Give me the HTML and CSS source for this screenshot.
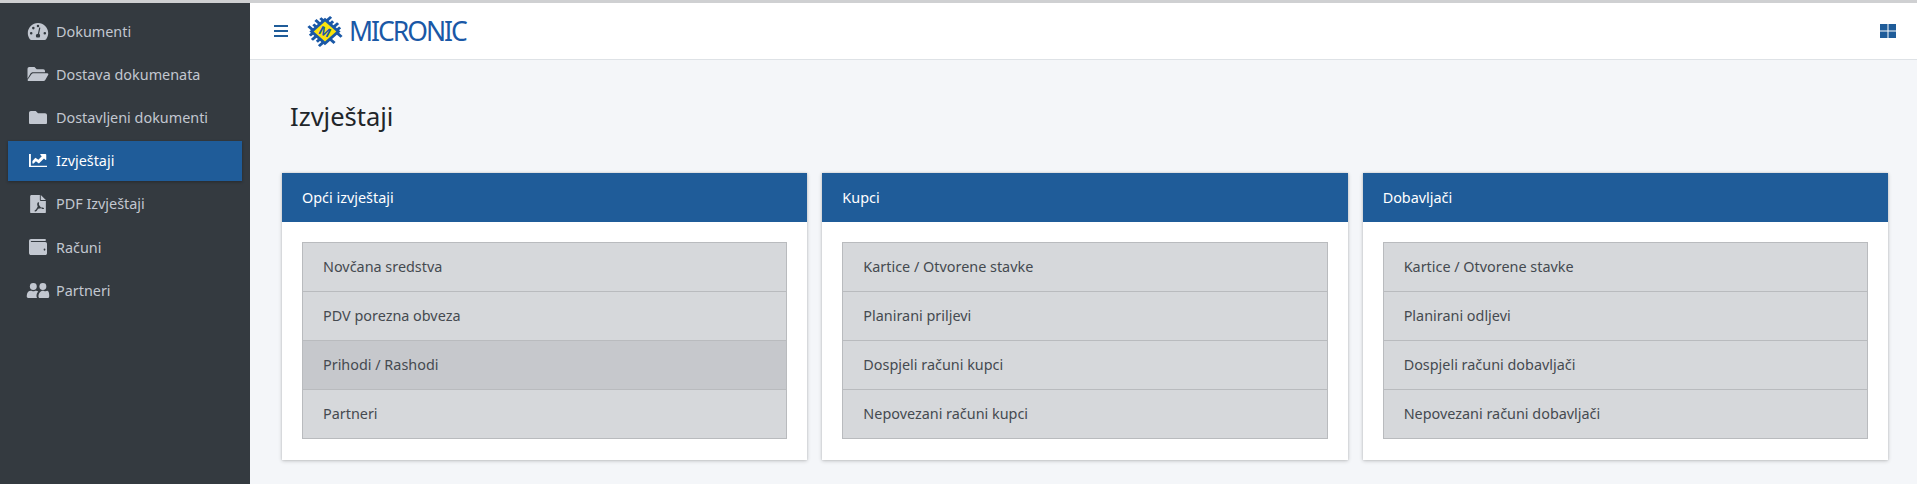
FILE: index.html
```html
<!DOCTYPE html>
<html lang="hr">
<head>
    <meta charset="UTF-8">
    <title>Izvještaji</title>
    <link rel="stylesheet" href="styles.css">
</head>
<body>
    <div class="wrapper">
        <!-- Sidebar -->
        <aside class="sidebar">
            <a class="nav-link" href="#">
                <svg class="nav-icon icon-gauge" viewBox="0 0 24 20"><path fill-rule="evenodd" d="M12 0C5.400 0 0 5.300 0 11.900c0 2.700.9 5.200 2.400 7.200.4.500 1 .9 1.700.9h15.800c.7 0 1.300-.4 1.700-.9 1.500-2 2.400-4.500 2.400-7.200C24 5.300 18.600 0 12 0zM4 13.500a1.500 1.500 0 1 1 0-3 1.500 1.500 0 0 1 0 3zM6.500 7.500a1.500 1.500 0 1 1 0-3 1.500 1.500 0 0 1 0 3zM12 5a1.500 1.500 0 1 1 0-3 1.500 1.500 0 0 1 0 3zM20 13.500a1.500 1.500 0 1 1 0-3 1.500 1.500 0 0 1 0 3zM14.800 5.600l-1.500 7.100c.7.500 1.200 1.300 1.200 2.300 0 .8-.3 1.400-.8 2H10.300c-.5-.6-.8-1.200-.8-2 0-1.400 1.100-2.500 2.400-2.500l1.500-7.200z"/></svg>
                <span>Dokumenti</span>
            </a>
            <a class="nav-link" href="#">
                <svg class="nav-icon icon-folder-open" viewBox="0 0 24 16"><path d="M0 13.500V2a2 2 0 0 1 2-2h6l2.500 2.500H18a2 2 0 0 1 2 2V6H6.500C5 6 3.800 6.700 3.100 8z"/><path d="M4.500 8.300C5 7.500 5.700 7 6.700 7h16c.9 0 1.500 1 1 1.800l-3.400 6C19.900 15.500 19.200 16 18.300 16H1.300c-.9 0-1.500-1-1-1.800z"/></svg>
                <span>Dostava dokumenata</span>
            </a>
            <a class="nav-link" href="#">
                <svg class="nav-icon icon-small" viewBox="0 0 24 18"><path d="M21.500 3H12L9 0H2.500C1.100 0 0 1.100 0 2.500v13C0 16.900 1.100 18 2.500 18h19c1.400 0 2.500-1.100 2.500-2.500v-10C24 4.100 22.900 3 21.500 3z"/></svg>
                <span>Dostavljeni dokumenti</span>
            </a>
            <a class="nav-link active" href="#">
                <svg class="nav-icon icon-small" viewBox="0 0 24 18"><path d="M0 0h2.500v15.500H24V18H1.200C.5 18 0 17.500 0 16.800z"/><path d="M4.500 12.500V9.300l4-4.300 4 2.800L17 3l-1.800-1.800c-.4-.5 0-1.200.6-1.200H22c.5 0 1 .4 1 1v6.200c0 .7-.8 1-1.300.6L20 6l-6.800 6.500-4-2.800-3 2.800z"/></svg>
                <span>Izvještaji</span>
            </a>
            <a class="nav-link" href="#">
                <svg class="nav-icon icon-pdf" viewBox="3 0 18 20"><path fill-rule="evenodd" d="M5 0h9v5.500c0 .5.500 1 1 1h5.500V18.500c0 .8-.7 1.500-1.500 1.500H5c-.8 0-1.500-.7-1.500-1.500V1.500C3.500.7 4.200 0 5 0zM11.800 8.500c-1 .3-.8 2.300-.1 3.800-.7 1.700-1.500 3-2.600 3.800-1.500.9-.7 2 .2 1.800 1-.2 1.800-1.300 2.800-3 1.200-.4 2.300-.6 3.400-.7 1.200 1 2.800 1.300 3 .4.200-1-1.500-1.300-3.300-1.200-1-.7-1.800-1.800-2.300-3 .3-1.300.3-2.900-1.100-2.900z"/><path d="M15 0l5.500 5.500H15z"/></svg>
                <span>PDF Izvještaji</span>
            </a>
            <a class="nav-link" href="#">
                <svg class="nav-icon icon-wallet" viewBox="0 0 24 18" preserveAspectRatio="none"><path fill-rule="evenodd" d="M2.700 0h18.600c.6 0 1.200.5 1.200 1.100 0 .6-.6 1.100-1.200 1.100H3.200c-.5 0-.8.300-.8.600s.3.700.8.700H21.800c1.200 0 2.200.9 2.200 2V16c0 1.100-1 2-2.200 2H2.700C1.200 18 0 16.900 0 15.700V2.300C0 1 1.200 0 2.700 0zM19.500 11.900a1.200 1.200 0 1 0 2.400 0 1.200 1.200 0 0 0-2.400 0z"/></svg>
                <span>Računi</span>
            </a>
            <a class="nav-link" href="#">
                <svg class="nav-icon icon-users" viewBox="0 0 24 16"><circle cx="7" cy="3.700" r="3.700"/><circle cx="17.200" cy="3.700" r="3.700"/><path d="M0 13.500c0-3.300 2-5.300 4.300-5.300 1 0 1.700.6 2.800.6s1.800-.6 2.800-.6c.9 0 1.700.3 2.300.8-1.200 1.200-1.800 3-1.800 4.900 0 .8.200 1.500.6 2.100H1.500C.6 16 0 15.400 0 14.500z"/><path d="M12.500 14.300c0-3.400 2-6.100 4.700-6.100 1 0 1.600.6 2.700.6 1 0 1.500-.6 2.400-.4 1.300.3 1.700 2.700 1.700 5.400 0 1.300-.6 2.200-1.600 2.200H14c-1 0-1.500-.8-1.500-1.700z"/></svg>
                <span>Partneri</span>
            </a>
        </aside>

        <div class="content-wrapper">
            <!-- Top bar -->
            <header class="navbar">
                <svg class="menu-icon" viewBox="0 0 14 12"><path d="M0 0h14v2H0zM0 5h14v2H0zM0 10h14v2H0z"/></svg>
                <div class="brand">
                    <svg class="brand-logo" viewBox="-20 -17.500 40 35">
                        <g transform="scale(1 .88) rotate(45)">
                            <g stroke="#1a58a6" stroke-width="3">
                                <path d="M-7.400-9v-7M-2.500-9v-5M2.500-9v-7M7.400-9v-5M-7.400 9v5M-2.500 9v7M2.500 9v5M7.400 9v7M-9-7.400h-5M-9-2.500h-7M-9 2.500h-5M-9 7.400h-7M9-7.400h7M9-2.500h-5M9 2.500h7M9 7.400h-5"/>
                            </g>
                            <rect x="-11" y="-11" width="22" height="22" fill="#1a58a6"/>
                            <rect x="-8" y="-8" width="16" height="16" fill="#fbe30c"/>
                            <text class="brand-mark" y="5" text-anchor="middle" transform="rotate(-20)">M</text>
                        </g>
                    </svg>
                    <span class="brand-text">MICRONIC</span>
                </div>
                <svg class="grid-icon" viewBox="0 0 16 14"><path d="M0 0h7.500v6.500H0zM8.500 0H16v6.500H8.500zM0 7.500h7.500V14H0zM8.500 7.500H16V14H8.500z"/></svg>
            </header>

            <main class="content">
                <h1 class="page-title">Izvještaji</h1>
                <div class="card-grid">
                    <section class="card">
                        <h2 class="card-header">Opći izvještaji</h2>
                        <div class="card-body">
                            <ul class="list">
                                <li>Novčana sredstva</li>
                                <li>PDV porezna obveza</li>
                                <li class="hover">Prihodi / Rashodi</li>
                                <li>Partneri</li>
                            </ul>
                        </div>
                    </section>
                    <section class="card">
                        <h2 class="card-header">Kupci</h2>
                        <div class="card-body">
                            <ul class="list">
                                <li>Kartice / Otvorene stavke</li>
                                <li>Planirani priljevi</li>
                                <li>Dospjeli računi kupci</li>
                                <li>Nepovezani računi kupci</li>
                            </ul>
                        </div>
                    </section>
                    <section class="card">
                        <h2 class="card-header">Dobavljači</h2>
                        <div class="card-body">
                            <ul class="list">
                                <li>Kartice / Otvorene stavke</li>
                                <li>Planirani odljevi</li>
                                <li>Dospjeli računi dobavljači</li>
                                <li>Nepovezani računi dobavljači</li>
                            </ul>
                        </div>
                    </section>
                </div>
            </main>
        </div>
    </div>
</body>
</html>
```

FILE: styles.css
```css
html, body {
    margin: 0;
    height: 100%;
    overflow: hidden;
}

body {
    font-family: "Noto Sans", "Open Sans", sans-serif;
    font-size: 14.4px;
    color: #454a50;
    background-color: #f4f6f9;
    border-top: 3px solid #cfd0d2;
    box-sizing: border-box;
}

.wrapper {
    display: flex;
    height: 100%;
}

/* Sidebar */
.sidebar {
    width: 234px;
    flex-shrink: 0;
    padding: 8.6px 8px 0;
    background-color: #343a40;
}

.nav-link {
    display: flex;
    align-items: center;
    height: 40px;
    margin-bottom: 3.2px;
    color: #c2c7d0;
    text-decoration: none;
}

.nav-link span {
    margin-top: -1px;
}

.nav-link.active {
    background-color: #1f5c99;
    color: #fff;
    box-shadow: 0 1px 3px rgba(0, 0, 0, .3);
}

.nav-icon {
    width: 24px;
    height: 16px;
    margin: -1px 6px 0 18px;
    fill: currentColor;
}

.icon-gauge { height: 17px; }
.icon-folder-open { height: 14px; }
.icon-small { height: 13.5px; }
.icon-pdf { height: 18.5px; }
.icon-users { height: 15px; }

.icon-wallet {
    width: 18px;
    height: 16px;
    margin-left: 21px;
    margin-right: 9px;
}

/* Top bar */
.content-wrapper {
    flex: 1;
    min-width: 0;
}

.navbar {
    display: flex;
    align-items: center;
    height: 56px;
    padding: 0 21px 0 24px;
    background-color: #fff;
    border-bottom: 1px solid #dee2e6;
}

.menu-icon {
    width: 14px;
    height: 12px;
    fill: #1f5c99;
}

.brand {
    display: flex;
    align-items: center;
    margin-left: 17px;
}

.brand-logo {
    width: 40px;
    height: 35px;
}

.brand-mark {
    font-family: "Liberation Sans", sans-serif;
    font-size: 14px;
    font-weight: bold;
    fill: #1a58a6;
}

.brand-text {
    margin-left: 4px;
    font-size: 26.5px;
    letter-spacing: -2px;
    color: #1a58a6;
}

.grid-icon {
    width: 16px;
    height: 14px;
    margin-left: auto;
    fill: #1f5c99;
}

/* Main content */
.content {
    padding: 0 29px 0 32px;
}

.page-title {
    margin: 0;
    padding: 39px 0 39px 8px;
    font-size: 25.5px;
    line-height: 35px;
    font-weight: 400;
    color: #212529;
}

.card-grid {
    display: grid;
    grid-template-columns: repeat(3, 1fr);
    gap: 15px;
}

.card {
    background-color: #fff;
    box-shadow: 0 0 2px rgba(0, 0, 0, .13), 0 1px 4px rgba(0, 0, 0, .2);
}

.card-header {
    margin: 0;
    padding: 0 20px;
    height: 49px;
    line-height: 49px;
    background-color: #1f5c99;
    color: #fff;
    font-size: 14.4px;
    font-weight: 400;
}

.card-body {
    padding: 20px 20px 21px;
}

.list {
    margin: 0;
    padding: 0;
    list-style: none;
    border: 1px solid #b9bbbe;
    border-bottom: 0;
}

.list li {
    height: 48px;
    padding-left: 20px;
    line-height: 48px;
    background-color: #d6d8db;
    border-bottom: 1px solid #b9bbbe;
}

.list li.hover {
    background-color: #c6c8cc;
}
```
